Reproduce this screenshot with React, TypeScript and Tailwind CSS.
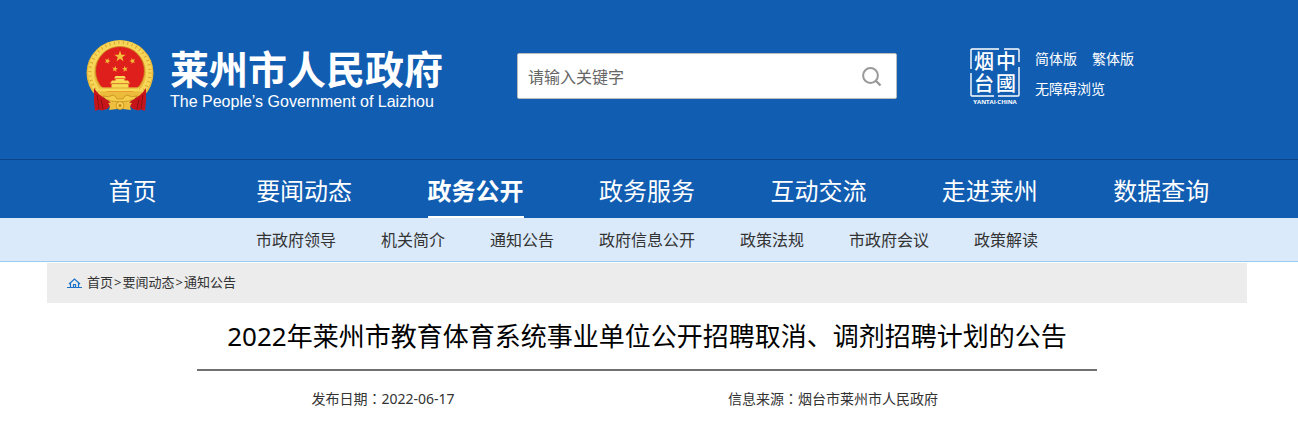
import { useState } from 'react';

const navItems = ['首页', '要闻动态', '政务公开', '政务服务', '互动交流', '走进莱州', '数据查询'];

const subItems = ['市政府领导', '机关简介', '通知公告', '政府信息公开', '政策法规', '市政府会议', '政策解读'];

const crumbs = ['首页', '要闻动态', '通知公告'];

const meta = [
  { label: '发布日期', value: '2022-06-17' },
  { label: '信息来源', value: '烟台市莱州市人民政府' },
];

const star = '0,-1 .23,-.31 .95,-.31 .37,.12 .59,.81 0,.39 -.59,.81 -.37,.12 -.95,-.31 -.23,-.31';

function Emblem() {
  const stars = [
    { x: 34, y: 16.5, s: 6, r: 0 },
    { x: 21.5, y: 21, s: 3.2, r: 20 },
    { x: 46.5, y: 21, s: 3.2, r: -20 },
    { x: 29, y: 29, s: 3.2, r: 10 },
    { x: 39, y: 29, s: 3.2, r: -10 },
  ];
  return (
    <svg width="68" height="72" viewBox="0 0 68 72" className="shrink-0" aria-hidden="true">
      <ellipse cx="34" cy="33" rx="33.500" ry="33" fill="#e8b93a" />
      <circle cx="34" cy="32.500" r="29" fill="none" stroke="#f6d658" strokeWidth="6" />
      <circle cx="34" cy="32.500" r="30" fill="none" stroke="#d9a32c" strokeWidth="3" strokeDasharray="1 3.500" />
      <circle cx="34" cy="31" r="24.500" fill="#df1f1c" stroke="#cc8f22" strokeWidth=".8" />
      {stars.map((p, i) => (
        <polygon
          key={i}
          points={star}
          fill="#f3c13a"
          transform={`translate(${p.x} ${p.y}) rotate(${p.r}) scale(${p.s})`}
        />
      ))}
      <path
        d="M28 38.500l1.500-2.500h9l1.500 2.500zM29.500 39h9v1.500h-9zM24 43.500l2-3h16l2 3zM25.500 44h17v3.500h-17zM15 47.500h38v4H13.500z"
        fill="#f8da55"
      />
      <path d="M24.500 43.700h19M16 48h36" stroke="#cf8a25" strokeWidth=".6" />
      <path d="M13 51.500h42l-3 6q-8 5-18 5t-18-5z" fill="#ecbb3a" />
      <path d="M8 48q5 8 13 11l5 5-5 5-5 1.500-3-1-4 1.500-1-10z" fill="#c5151b" />
      <path d="M60 48q-5 8-13 11l-5 5 5 5 5 1.500 3-1 4 1.500 1-10z" fill="#c5151b" />
      <path d="M11 55l2 14M15 59l2 10M57 55l-2 14M53 59l-2 10" stroke="#8d0d14" strokeWidth="1" />
      <path
        d="M17 56q6 2 10-1 3 1 4 4h6q1-3 4-4 4 3 10 1-2 4-8 5l-9 1-9-1q-6-1-8-5z"
        fill="#f5cd49"
        stroke="#b97c1c"
        strokeWidth=".6"
      />
      <path d="M22 63l9-1v7l-8 1q2-4-1-7zM46 63l-9-1v7l8 1q-2-4 1-7z" fill="#eebe3e" />
      <circle cx="34" cy="65.500" r="4" fill="#f6cf4c" stroke="#c2851d" strokeWidth=".8" />
      <circle cx="34" cy="65.500" r="1.500" fill="#c2851d" />
    </svg>
  );
}

function Seal() {
  return (
    <svg width="50" height="58" viewBox="0 0 50 58" className="shrink-0" fill="#fff" role="img" aria-label="YANTAI CHINA">
      <path
        d="M1 21V2q0-1 1-1H29M34 1h14q1 0 1 1V14M49 19v28q0 1-1 1H28M24 48H2q-1 0-1-1V25"
        fill="none"
        stroke="#fff"
        strokeWidth="1.400"
      />
      <g className="font-['Noto_Sans_CJK_SC',sans-serif] text-[20px] font-medium">
        <text x="4" y="21">烟</text>
        <text x="4" y="43">台</text>
        <text x="26" y="21">中</text>
        <text x="26" y="43">國</text>
      </g>
      <text x="25" y="56" textAnchor="middle" className="font-['Open_Sans',sans-serif] text-[6px] font-bold">
        YANTAI·CHINA
      </text>
    </svg>
  );
}

export default function App() {
  const [keyword, setKeyword] = useState('');

  return (
    <div className="bg-white font-['Noto_Sans','Noto_Sans_CJK_SC',sans-serif] text-[#333]">
      <header className="bg-[#115db2] text-white">
        <div className="border-b border-[#0c4587] pr-1">
          <div className="max-w-[1200px] mx-auto flex items-start pl-[39px] pt-10 pb-[46px]">
            <a href="#" className="flex shrink-0 gap-4">
              <Emblem />
              <div>
                <h1 className="font-['Noto_Sans_CJK_SC',sans-serif] text-[39px] leading-[48px] font-bold whitespace-nowrap mt-[3px]">
                  莱州市人民政府
                </h1>
                <p className="font-['Liberation_Sans',sans-serif] text-base leading-[22px]">
                  The People’s Government of Laizhou
                </p>
              </div>
            </a>
            <form
              onSubmit={(e) => e.preventDefault()}
              className="flex items-center w-[380px] h-[46px] mt-[13px] ml-[74px] bg-white border border-[#bbb] rounded-xs"
            >
              <input
                type="text"
                aria-label="请输入关键字"
                placeholder="请输入关键字"
                value={keyword}
                onChange={(e) => setKeyword(e.target.value)}
                className="flex-1 min-w-0 h-full px-2.5 pt-0.5 text-base text-[#333] placeholder:text-[#666] outline-none"
              />
              <button type="submit" aria-label="搜索" className="mr-3.5 pt-0.5">
                <svg width="20" height="20" viewBox="0 0 20 20" fill="none" stroke="#999">
                  <circle cx="8.500" cy="8.500" r="7.400" strokeWidth="2" />
                  <path d="M13.500 13.500l5 5" strokeWidth="2.400" />
                </svg>
              </button>
            </form>
            <div className="flex shrink-0 gap-[15px] mt-2 ml-[73px]">
              <Seal />
              <div className="text-sm leading-[30px] -mt-1">
                <div className="flex gap-[15px]">
                  <a href="#">简体版</a>
                  <a href="#">繁体版</a>
                </div>
                <a href="#">无障碍浏览</a>
              </div>
            </div>
          </div>
        </div>
        <nav className="pr-1">
          <div className="max-w-[1200px] mx-auto grid grid-cols-7 justify-items-center">
            {navItems.map((item) => (
              <a
                key={item}
                href="#"
                className={`h-[58px] text-2xl leading-[62px] whitespace-nowrap border-b-2 ${
                  item === '政务公开' ? 'font-bold border-white' : 'border-transparent'
                }`}
              >
                {item}
              </a>
            ))}
          </div>
        </nav>
      </header>

      <nav className="bg-[#daeafa] border-b border-[#9acbf0] pr-1">
        <div className="max-w-[1200px] mx-auto flex justify-center gap-[45px] h-[43px] text-base leading-[45px]">
          {subItems.map((item) => (
            <a key={item} href="#" className="whitespace-nowrap">
              {item}
            </a>
          ))}
        </div>
      </nav>

      <main className="pr-1 pt-px">
        <div className="max-w-[1200px] mx-auto">
          <div className="flex items-center h-10 px-5 bg-[#ececec] text-[13px]">
            <svg width="15" height="11" viewBox="0 0 15 11" fill="none" stroke="#1a73c8" className="mr-[5px]">
              <path d="M0 9.500h15M2 6l5.500-5L13 6M3.500 5v4M11.500 5v4M6.500 9.500v-3h2v3" strokeWidth="1.200" />
            </svg>
            {crumbs.map((item, index) => (
              <span key={item}>
                {index > 0 && <span className="px-px">{'>'}</span>}
                <a href="#">{item}</a>
              </span>
            ))}
          </div>

          <div className="max-w-[900px] mx-auto">
            <h2 className="text-[26px] leading-[66px] text-center text-black border-b-2 border-[#707070]">
              2022年莱州市教育体育系统事业单位公开招聘取消、调剂招聘计划的公告
            </h2>
            <div className="grid grid-cols-2 pt-4 text-sm leading-[22px] text-center">
              {meta.map((item) => (
                <p key={item.label} className="pr-[78px]">
                  {item.label}
                  <span className="font-['Noto_Sans_CJK_TC',sans-serif]">：</span>
                  {item.value}
                </p>
              ))}
            </div>
          </div>
        </div>
      </main>
    </div>
  );
}
